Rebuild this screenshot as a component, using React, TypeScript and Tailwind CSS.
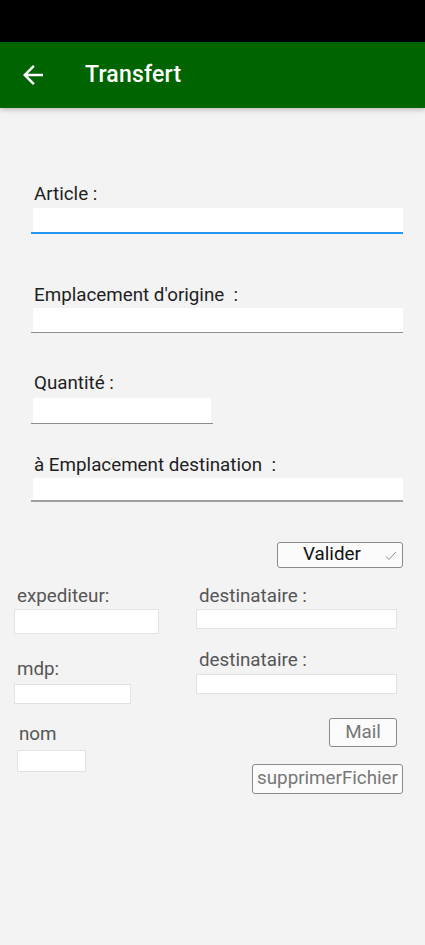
import React from "react";

const font = { fontFamily: "Roboto, 'Noto Sans', sans-serif" };

function TopField({
  label,
  width,
  labelTop,
  inputTop,
  inputH,
  line,
}: {
  label: string;
  width: string;
  labelTop: string;
  inputTop: string;
  inputH: string;
  line: string;
}) {
  return (
    <div className={`${labelTop} ml-[31px] ${width}`}>
      <div className="pl-[3px] text-[18.8px] leading-[21px] text-[#1e1e1e] whitespace-pre">{label}</div>
      <div className={`${inputTop} pl-[2px]`}>
        <div className={`${inputH} bg-white`} />
        <div className={line} />
      </div>
    </div>
  );
}

export default function App() {
  return (
    <div className="min-h-[945px] w-[425px] bg-[#f3f3f3] overflow-hidden" style={font}>
      <div className="h-[42px] bg-black" />
      <div className="relative h-[66px] bg-[#006400] flex items-center shadow-[0_2px_5px_rgba(0,0,0,0.22)]">
        <svg className="ml-[18px]" width="30" height="30" viewBox="0 0 24 24" fill="white">
          <path d="M20 11H7.83l5.59-5.59L12 4l-8 8 8 8 1.41-1.41L7.83 13H20v-2z" />
        </svg>
        <div className="ml-[37px] text-[23px] font-medium text-white tracking-[0.2px]">Transfert</div>
      </div>

      <TopField
        label="Article :"
        width="w-[372px]"
        labelTop="mt-[76px]"
        inputTop="mt-[3px]"
        inputH="h-[24px]"
        line="h-[2px] -ml-[2px] bg-[#2196f3]"
      />
      <TopField
        label="Emplacement d'origine  :"
        width="w-[372px]"
        labelTop="mt-[51px]"
        inputTop="mt-[2px]"
        inputH="h-[24px]"
        line="h-[1px] -ml-[2px] bg-[#8c8c8c]"
      />
      <TopField
        label="Quantité :"
        width="w-[182px]"
        labelTop="mt-[40px]"
        inputTop="mt-[4px]"
        inputH="h-[25px] mr-[2px]"
        line="h-[1px] -ml-[2px] bg-[#8c8c8c]"
      />
      <TopField
        label="à Emplacement destination  :"
        width="w-[372px]"
        labelTop="mt-[31px]"
        inputTop="mt-[2px]"
        inputH="h-[22px]"
        line="h-[1.5px] -ml-[2px] bg-[#a0a0a0]"
      />

      <div className="mt-[40px] flex justify-end pr-[22px]">
        <div className="relative w-[126px] h-[26px] rounded-[3px] border border-[#8a8a8a] bg-[#fbfbfb] flex items-center">
          <span className="ml-[25px] text-[18.8px] leading-[21px] text-[#111]">Valider</span>
          <svg className="absolute right-[5px] top-[8px]" width="12" height="10" viewBox="0 0 12 10" fill="none">
            <path d="M1 5.5 L4 8.5 L11 1" stroke="#8a8a8a" strokeWidth="1" />
          </svg>
        </div>
      </div>

      <div className="mt-[18px] flex text-[#555] text-[18.8px] leading-[21px]">
        <div className="ml-[14px] w-[160px] flex flex-col">
          <div className="pl-[3px]">expediteur:</div>
          <div className="mt-[2px] w-[145px] h-[25px] bg-white border border-[#e2e2e2]" />
          <div className="mt-[25px] pl-[3px]">mdp:</div>
          <div className="mt-[4px] w-[117px] h-[20px] bg-white border border-[#e2e2e2]" />
          <div className="mt-[20px] pl-[5px]">nom</div>
          <div className="mt-[5px] ml-[3px] w-[69px] h-[22px] bg-white border border-[#e2e2e2]" />
        </div>
        <div className="ml-[22px] flex-1 mr-[22px] flex flex-col">
          <div className="pl-[3px]">destinataire :</div>
          <div className="mt-[2px] w-[201px] h-[20px] bg-white border border-[#e2e2e2]" />
          <div className="mt-[21px] pl-[3px]">destinataire :</div>
          <div className="mt-[3px] w-[201px] h-[20px] bg-white border border-[#e2e2e2]" />
          <div className="mt-[24px] flex justify-end pr-[6px]">
            <div className="w-[68px] h-[29px] rounded-[3px] border border-[#8a8a8a] bg-[#fbfbfb] flex items-center justify-center text-[#777]">
              Mail
            </div>
          </div>
          <div className="mt-[17px] flex justify-end">
            <div className="w-[151px] h-[30px] rounded-[3px] border border-[#8a8a8a] bg-[#fbfbfb] flex items-center justify-center text-[#777]">
              supprimerFichier
            </div>
          </div>
        </div>
      </div>
    </div>
  );
}
